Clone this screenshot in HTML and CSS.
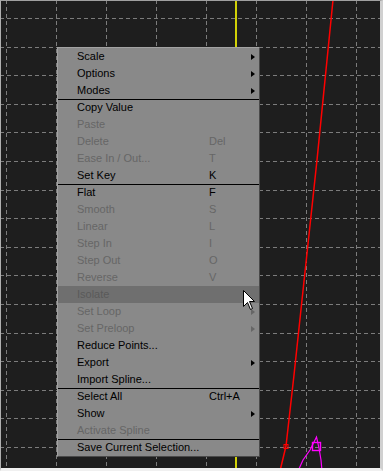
FILE: index.html
```html
<!DOCTYPE html>
<html lang="en">
<head>
  <meta charset="UTF-8">
  <title>Curve Editor</title>
  <link rel="stylesheet" href="styles.css">
</head>
<body>
  <div class="viewport">
    <svg class="graph" width="383" height="471" viewBox="0 0 383 471">
      <g class="grid">
        <line x1="6.5" y1="0" x2="6.5" y2="471"/>
        <line x1="56.5" y1="0" x2="56.5" y2="471"/>
        <line x1="106.5" y1="0" x2="106.5" y2="471"/>
        <line x1="156.5" y1="0" x2="156.5" y2="471"/>
        <line x1="206.5" y1="0" x2="206.5" y2="471"/>
        <line x1="256.5" y1="0" x2="256.5" y2="471"/>
        <line x1="306.5" y1="0" x2="306.5" y2="471"/>
        <line x1="356.5" y1="0" x2="356.5" y2="471"/>
        <line x1="0" y1="18.5" x2="383" y2="18.5"/>
        <line x1="0" y1="47.5" x2="383" y2="47.5"/>
        <line x1="0" y1="75.5" x2="383" y2="75.5"/>
        <line x1="0" y1="104.5" x2="383" y2="104.5"/>
        <line x1="0" y1="132.5" x2="383" y2="132.5"/>
        <line x1="0" y1="161.5" x2="383" y2="161.5"/>
        <line x1="0" y1="190.5" x2="383" y2="190.5"/>
        <line x1="0" y1="218.5" x2="383" y2="218.5"/>
        <line x1="0" y1="247.5" x2="383" y2="247.5"/>
        <line x1="0" y1="275.5" x2="383" y2="275.5"/>
        <line x1="0" y1="304.5" x2="383" y2="304.5"/>
        <line x1="0" y1="333.5" x2="383" y2="333.5"/>
        <line x1="0" y1="361.5" x2="383" y2="361.5"/>
        <line x1="0" y1="390.5" x2="383" y2="390.5"/>
        <line x1="0" y1="418.5" x2="383" y2="418.5"/>
        <line x1="0" y1="447.5" x2="383" y2="447.5"/>
      </g>
      <line class="time" x1="236" y1="0" x2="236" y2="471"/>
      <path class="curve-red" d="M333,0 L325,80 L317,160 L302,300 L294,375 L286,446 L280,471"/>
      <rect class="key-red" x="284" y="444.5" width="4" height="4"/>
      <path class="curve-mag" d="M298,471 L303,460 L310,450 L316.5,437 L319,448 L321,460 L322,471"/>
      <rect class="key-mag" x="312.5" y="442.5" width="8" height="8"/>
    </svg>

    <ul class="menu">
      <li class="item sub"><span class="label">Scale</span><span class="key"></span><i class="arrow"></i></li>
      <li class="item sub"><span class="label">Options</span><span class="key"></span><i class="arrow"></i></li>
      <li class="item sub"><span class="label">Modes</span><span class="key"></span><i class="arrow"></i></li>
      <li class="item sep"><span class="label">Copy Value</span></li>
      <li class="item off"><span class="label">Paste</span></li>
      <li class="item off"><span class="label">Delete</span><span class="key">Del</span></li>
      <li class="item off"><span class="label">Ease In / Out...</span><span class="key">T</span></li>
      <li class="item"><span class="label">Set Key</span><span class="key">K</span></li>
      <li class="item sep"><span class="label">Flat</span><span class="key">F</span></li>
      <li class="item off"><span class="label">Smooth</span><span class="key">S</span></li>
      <li class="item off"><span class="label">Linear</span><span class="key">L</span></li>
      <li class="item off"><span class="label">Step In</span><span class="key">I</span></li>
      <li class="item off"><span class="label">Step Out</span><span class="key">O</span></li>
      <li class="item off"><span class="label">Reverse</span><span class="key">V</span></li>
      <li class="item off hover"><span class="label">Isolate</span></li>
      <li class="item off sub"><span class="label">Set Loop</span><span class="key"></span><i class="arrow"></i></li>
      <li class="item off sub"><span class="label">Set Preloop</span><span class="key"></span><i class="arrow"></i></li>
      <li class="item"><span class="label">Reduce Points...</span></li>
      <li class="item sub"><span class="label">Export</span><span class="key"></span><i class="arrow"></i></li>
      <li class="item"><span class="label">Import Spline...</span></li>
      <li class="item sep"><span class="label">Select All</span><span class="key">Ctrl+A</span></li>
      <li class="item sub"><span class="label">Show</span><span class="key"></span><i class="arrow"></i></li>
      <li class="item off"><span class="label">Activate Spline</span></li>
      <li class="item sep"><span class="label">Save Current Selection...</span></li>
    </ul>

    <svg class="cursor" width="13" height="21" viewBox="0 0 13 21">
      <path d="M0.5,0.5 L0.5,16.5 L4.5,12.5 L7.5,19.5 L9.5,18.5 L6.5,11.5 L11.5,11.5 Z"/>
    </svg>
  </div>
</body>
</html>
```

FILE: styles.css
```css
body { margin: 0; background: #1e1e1e; font-family: "Liberation Sans", Arial, sans-serif; }

.viewport { position: relative; width: 383px; height: 471px; overflow: hidden; background: #1e1e1e; }
.viewport::after { content: ""; position: absolute; inset: 0; border-style: solid; border-width: 1px 3px 3px 1px;
  border-color: #a0a0a0 #d0d0d0 #f0f0f0 #b0b0b0; pointer-events: none; }

.graph { display: block; }
.grid line { stroke: #7c7c7c; stroke-width: 1; stroke-dasharray: 4 3; }
.time { stroke: #ffff00; stroke-width: 1.6; }
.curve-red { fill: none; stroke: #ff0000; stroke-width: 1.5; }
.key-red { fill: none; stroke: #ff0000; stroke-width: 1; }
.curve-mag { fill: none; stroke: #ff00ff; stroke-width: 1.2; }
.key-mag { fill: none; stroke: #ff00ff; stroke-width: 1.4; }

.menu { position: absolute; left: 57px; top: 47px; width: 203px; box-sizing: border-box; margin: 0; padding: 0;
  list-style: none; background: #898989; border: 1px solid; border-color: #a2a2a2 #4a4a4a #4a4a4a #a2a2a2;
  font-size: 11px; color: #000; }
.item { display: grid; grid-template-columns: 132px 1fr 5px; height: 17px; line-height: 17px;
  padding: 0 3px 0 19px; white-space: nowrap; }
.item.sep { box-shadow: inset 0 1px 0 #000; }
.item.off { color: #666; }
.item.hover { background: #6f6f6f; color: #5a5a5a; }
.arrow { align-self: center; width: 0; height: 0; border-style: solid; border-width: 3.5px 0 3.5px 4px;
  border-color: transparent transparent transparent #000; }
.item.off .arrow { border-left-color: #666; }

.cursor { position: absolute; left: 243px; top: 290px; }
.cursor path { fill: #fff; stroke: #000; stroke-width: 1; }
```
